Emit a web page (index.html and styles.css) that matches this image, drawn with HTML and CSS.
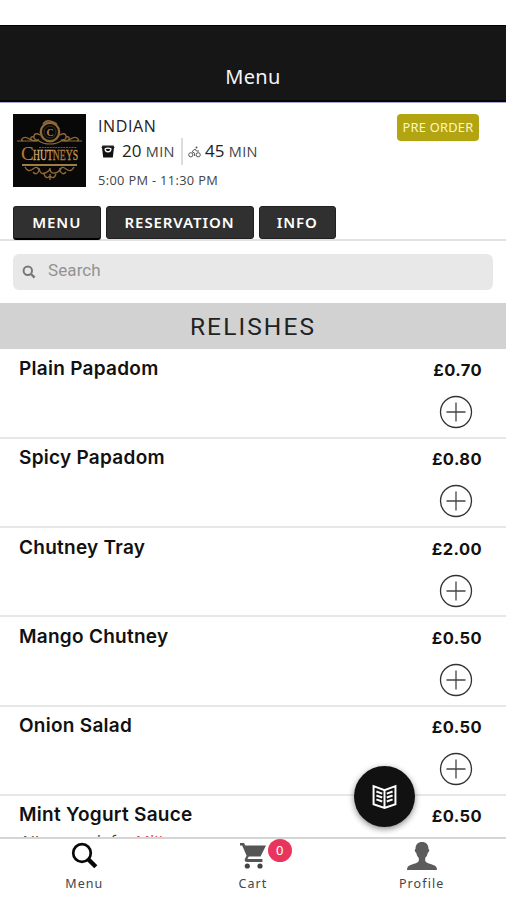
FILE: index.html
```html
<!DOCTYPE html>
<html lang="en">
<head>
<meta charset="utf-8">
<title>Menu</title>
<link rel="stylesheet" href="styles.css">
</head>
<body>
<svg class="defs" width="0" height="0" aria-hidden="true">
  <symbol id="plus" viewBox="0 0 34 34"><circle cx="17" cy="17" r="15.5" fill="none" stroke="#333" stroke-width="1.3"/><path d="M17 7.5v19M7.5 17h19" stroke="#444" stroke-width="1.3"/></symbol>
</svg>
<div class="screen">
  <header class="topbar"><h1>Menu</h1></header>
  <section class="shop">
    <div class="summary">
      <svg class="logo" viewBox="0 0 73 73">
        <defs><linearGradient id="gold" gradientUnits="userSpaceOnUse" x1="8" x2="65" y1="0" y2="0"><stop offset="0" stop-color="#b46b2c"/><stop offset=".4" stop-color="#e8c58a"/><stop offset=".65" stop-color="#a87036"/><stop offset="1" stop-color="#d09a50"/></linearGradient></defs>
        <rect width="73" height="73" fill="#070807"/>
        <g fill="none" stroke="#8d6838" stroke-width="1.4">
          <circle cx="37" cy="18" r="9.2" stroke-width="2.4"/><circle cx="37" cy="18" r="6" stroke="#4a3820" stroke-width=".8"/>
          <path d="M4 27H26Q30 30 37 30T48 27H69" stroke-width="1.2"/>
          <path d="M27 21q-5-3-6 1t5 4q-7 2-8-1t3-2M47 21q5-3 6 1t-5 4q7 2 8-1t-3-2M18 26q-5-4-8-2t0 3M56 26q5-4 8-2t0 3"/>
          <path d="M30 10q3-4 7-3t7 3"/>
          <path d="M9 51H64" stroke="#d3a45d" stroke-width="1.3"/>
          <path d="M12 53q3 6 8 2t6 2q-3 5-6 1M61 53q-3 6-8 2t-6 2q3 5 6 1M26 54q1 7 6 5t5-5q0 6 5 5t5-5M31 60q2 6 6 2q4 4 6-2M37 60v6"/>
        </g>
        <text class="logo-c" x="37" y="21.500" text-anchor="middle" fill="#a88350">C</text>
        <path d="M26 33.500H64" stroke="#77522d" stroke-width="1" stroke-dasharray="2 .7"/>
        <text class="logo-initial" x="8" y="46" fill="url(#gold)">C</text><text class="logo-name" x="20" y="46" fill="url(#gold)" stroke="url(#gold)" stroke-width=".3" textLength="45" lengthAdjust="spacingAndGlyphs">HUTNEYS</text>
      </svg>
      <div class="details">
        <div class="cuisine">INDIAN</div>
        <div class="times">
          <svg class="bag" viewBox="0 0 14 13"><path d="M1.400 .5h11.200l1 2.500H.4z" fill="#222"/><path d="M1 2.500h12l-1.200 10H2.200z" fill="#111"/><path d="M4 3.800q3-1.500 6 0a3 3 0 0 1-6 0" fill="none" stroke="#fff" stroke-width="1.200"/></svg>
          <span class="time pickup">20 <small>MIN</small></span>
          <svg class="bike" viewBox="0 0 13 12"><g fill="none" stroke="#555" stroke-width="1"><circle cx="2.8" cy="8.8" r="2.1"/><circle cx="10.2" cy="8.8" r="2.1"/><path d="M11 5H8.5L7 3 4 5.7l2.6 1.5V10"/></g><circle cx="8.5" cy="1.5" r="1" fill="#555"/></svg>
          <span class="time delivery">45 <small>MIN</small></span>
        </div>
        <div class="hours">5:00 PM - 11:30 PM</div>
      </div>
      <span class="preorder">PRE ORDER</span>
    </div>
    <nav class="tabs"><a class="tab menu">MENU</a><a class="tab reservation">RESERVATION</a><a class="tab info">INFO</a></nav>
  </section>
  <div class="search">
    <svg viewBox="0 0 14 14"><circle cx="5.8" cy="5.8" r="4.2" fill="none" stroke="#777" stroke-width="2"/><path d="M9 9l3.6 3.6" stroke="#777" stroke-width="2.4"/></svg>
    <span>Search</span>
  </div>
  <h2 class="category">RELISHES</h2>
  <main class="items">
    <div class="item"><div class="name">Plain Papadom</div><div class="buy"><b>£0.70</b><svg><use href="#plus"/></svg></div></div>
    <div class="item"><div class="name">Spicy Papadom</div><div class="buy"><b>£0.80</b><svg><use href="#plus"/></svg></div></div>
    <div class="item"><div class="name">Chutney Tray</div><div class="buy"><b>£2.00</b><svg><use href="#plus"/></svg></div></div>
    <div class="item"><div class="name">Mango Chutney</div><div class="buy"><b>£0.50</b><svg><use href="#plus"/></svg></div></div>
    <div class="item"><div class="name">Onion Salad</div><div class="buy"><b>£0.50</b><svg><use href="#plus"/></svg></div></div>
    <div class="item"><div class="name">Mint Yogurt Sauce<div class="allergens">Allergens info: <span>Milk</span></div></div><div class="buy"><b>£0.50</b></div></div>
  </main>
  <footer class="bottom">
    <div class="link"><svg viewBox="0 0 28 28"><circle cx="12" cy="11" r="8.8" fill="none" stroke="#080808" stroke-width="2.700"/><path d="M18.500 17.500l7.300 7.300" stroke="#080808" stroke-width="4.400"/></svg><span>Menu</span></div>
    <div class="link cart"><svg viewBox="0 0 28 28"><path d="M1 1h4l1.300 2.500H27L21.500 14.500H9.800l-1.400 2.600h15V20H8q-3.200-.3-2-3.200l1.600-3L3.200 3.400H1z" fill="#555"/><circle cx="8.300" cy="24" r="2.600" fill="#444"/><circle cx="21" cy="24" r="2.600" fill="#444"/></svg><span>Cart</span><i class="badge">0</i></div>
    <div class="link profile"><svg class="person" viewBox="0 0 32 28"><path d="M16 0c4.1 0 6.6 2.8 6.4 6.8 1.5.7.8 3.5-.6 4-.5 2.7-1.5 4.2-2.6 5.1v3.2c1.5 2.5 5.2 2.5 8.8 4.2 2.3 1 3 2.500 3 5.200H1c0-2.700.7-4.200 3-5.200 3.600-1.700 7.300-1.700 8.800-4.200v-3.200c-1.100-.9-2.100-2.400-2.600-5.100-1.400-.5-2.100-3.300-.6-4C9.400 2.800 11.900 0 16 0z" fill="#5c5c5c"/></svg><span>Profile</span></div>
  </footer>
  <button class="book" aria-label="Categories"><svg viewBox="0 0 24 24" fill="none" stroke="#fff" stroke-width="1.9"><path d="M1.500 2l10.500 4 10.500-4v17.500L12 23l-10.500-3.500zM12 6v16"/><path d="M4.200 7.200l5.600 2M4.200 11l5.600 2M4.200 14.800l5.600 2M14.200 9.200l5.600-2M14.200 13l5.600-2M14.200 16.800l5.600-2"/></svg></button>
</div>
</body>
</html>
```

FILE: styles.css
```css
* { box-sizing: border-box; }
body { margin: 0; background: #fff; font-family: "Noto Sans", "Open Sans", sans-serif; color: #222; }
svg { display: block; flex: none; }
.defs { position: absolute; }
.screen { position: relative; width: 506px; height: 900px; padding-top: 25px; overflow: hidden; display: flex; flex-direction: column; }
.topbar { flex: none; height: 78px; background: #161616; border-top: 1px solid #000; border-bottom: 1px solid #a7a5d5; box-shadow: inset 0 -2px #050505; color: #f5f5f5; text-align: center; }
h1 { margin: 0; padding-top: 37px; font-size: 20px; font-weight: 400; line-height: 28px; letter-spacing: .4px; }
.shop { flex: none; height: 138px; padding: 11px 13px 0; border-bottom: 2px solid #e2e2e2; }
.summary { display: flex; height: 92px; }
.logo { width: 73px; height: 73px; overflow: visible; }
.logo text { font-family: "Liberation Serif", serif; }
.logo-c { font-size: 10px; font-weight: bold; }
.logo-initial { font-size: 19px; }
.logo-name { font-size: 15px; }
.details { margin-left: 12px; flex: 1; white-space: nowrap; font-family: "Open Sans", sans-serif; }
.cuisine { font-size: 16px; line-height: 24px; height: 24px; letter-spacing: .6px; }
.times { display: flex; align-items: center; height: 27px; }
.bag { width: 14px; height: 13px; margin-left: 3px; }
.time { font-size: 17px; line-height: 26px; }
.time small { font-size: 14.500px; color: #444; letter-spacing: .25px; }
.pickup { width: 61px; margin-left: 7px; border-right: 2px solid #ddd; }
.bike { width: 13px; height: 12px; margin: 0 4px 0 5px; }
.hours { margin-top: 6px; font-size: 12.800px; line-height: 18px; letter-spacing: .35px; color: #444; }
.preorder { width: 82px; height: 27px; margin-right: 14px; border-radius: 4px; background: #b2a511; color: #fff6c8; font-size: 12.800px; line-height: 27px; letter-spacing: .25px; text-align: center; white-space: nowrap; }
.tabs { display: flex; gap: 5px; }
.tab { height: 33px; border: 1px solid #202020; border-radius: 3px; background: #303030; color: #fff; font-size: 15px; font-weight: 600; line-height: 31px; text-align: center; letter-spacing: .9px; }
.menu { width: 87.500px; height: 34px; border-bottom: 2px solid #000; }
.reservation { width: 148px; }
.info { width: 77.500px; }
.search { flex: none; display: flex; align-items: center; height: 36px; margin: 13px 13px; padding: 0 9px; border-radius: 6px; background: #e8e8e8; color: #929292; font: 17px/32px Roboto, sans-serif; }
.search svg { width: 14px; height: 14px; margin-right: 12px; }
.search span { padding-bottom: 4px; letter-spacing: .1px; }
.category { flex: none; height: 46px; margin: 0; background: #d2d2d2; color: #222; font: 400 24.500px/47px Roboto, sans-serif; letter-spacing: 2.100px; text-align: center; }
.items { flex: none; height: 489px; overflow: hidden; padding-top: .6px; font-family: Inter, sans-serif; }
.item { display: flex; justify-content: space-between; height: 89.300px; padding: 6.400px 24px 0 19px; border-bottom: 2px solid #e7e7e7; }
.name { color: #111; font-size: 19px; font-weight: 600; line-height: 25px; letter-spacing: .27px; white-space: nowrap; }
.buy { width: 50px; text-align: right; }
.buy b { display: flex; justify-content: flex-end; font-size: 16.500px; font-weight: 700; line-height: 29px; letter-spacing: .4px; color: #111; white-space: nowrap; }
.buy svg { width: 34px; height: 34px; margin: 10px 0 0 7px; }
.allergens { margin-top: 3.500px; font-size: 15px; font-style: italic; font-weight: 400; line-height: 22px; letter-spacing: .65px; color: #444; }
.allergens span { color: #d44; }
.bottom { position: absolute; left: 0; right: 0; bottom: 0; height: 63px; display: grid; grid-template-columns: repeat(3, 1fr); background: #fff; border-top: 2px solid #d5d5d5; }
.link { position: relative; display: flex; flex-direction: column; align-items: center; padding-top: 3px; color: #444; font-size: 12.500px; line-height: 18px; letter-spacing: 1.100px; }
.link svg { width: 28px; height: 28px; }
.link span { margin-top: 5px; }
.link .person { width: 32px; }
.badge { position: absolute; left: 99px; top: 0; width: 24px; height: 23px; border-radius: 50%; background: #e9355b; color: #fff; font-size: 13px; font-style: normal; line-height: 23px; text-align: center; letter-spacing: 0; }
.book { position: absolute; left: 354px; top: 766px; width: 61px; height: 61px; border: 0; border-radius: 50%; padding: 0; display: grid; place-items: center; background: #111; box-shadow: 0 2px 6px #0007; }
.book svg { width: 25px; height: 25px; }
```
